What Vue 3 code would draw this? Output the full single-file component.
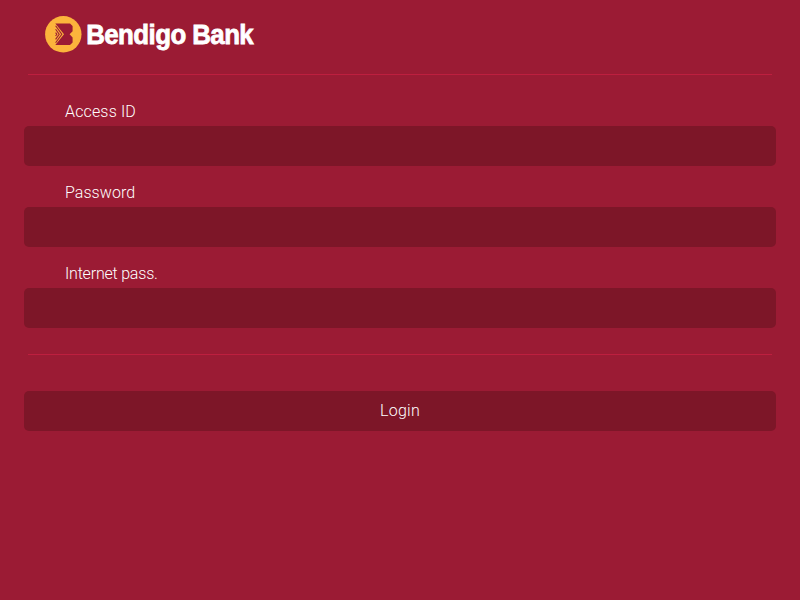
<script setup>
const fields = [
  { name: 'Access ID', spacing: 'regular' },
  { name: 'Password', spacing: 'snug' },
  { name: 'Internet pass.', spacing: 'tight' },
]
</script>

<template>
  <main class="page">
    <header class="header">
      <svg class="logo" width="230" height="44" viewBox="0 0 230 44" role="img" aria-label="Bendigo Bank">
        <circle cx="19.3" cy="20.3" r="18.2" fill="#fcb43c" />
        <path d="M11.3 9.5H26L28.6 12V17.2L25.6 20.3L28.6 23.4V28.6L26 31.1H11.3L20 20.3Z" fill="#9b1b34" />
        <path d="M11.6 11.8L17.8 20.3L11.6 28.8M11.6 15.2L15.2 20.3L11.6 25.4M11.6 18.6L12.8 20.3L11.6 22" fill="none" stroke="#9b1b34" stroke-width="1.1" />
        <text class="wordmark" x="42.2" y="30.4" textLength="167" lengthAdjust="spacingAndGlyphs">Bendigo Bank</text>
      </svg>
    </header>
    <hr class="rule" />
    <section class="fields">
      <label v-for="field in fields" :key="field.name" class="field">
        <span class="label" :class="field.spacing">{{ field.name }}</span>
        <input class="input" type="text" readonly />
      </label>
    </section>
    <hr class="rule" />
    <button class="login" type="button">Login</button>
  </main>
</template>

<style>
body {
  background: #9b1b34;
}
</style>

<style scoped>
.page {
  box-sizing: border-box;
  min-height: 600px;
  padding: 0 24px;
  background: #9b1b34;
  color: #fff;
  font: 300 16px/18px Roboto, "Liberation Sans", sans-serif;
}
.header {
  height: 60px;
  padding: 14px 0 0 20px;
}
.logo {
  display: block;
}
.wordmark {
  fill: #fff;
  stroke: #fff;
  stroke-width: 0.8px;
  font: bold 28px "Liberation Sans", Arial, sans-serif;
  letter-spacing: -0.6px;
}
.rule {
  height: 1px;
  margin: 0 4px;
  border: 0;
  background: #bd1f3f;
}
.fields {
  display: flex;
  flex-direction: column;
  gap: 17px;
  padding: 28px 0 26px;
}
.field {
  display: flex;
  flex-direction: column;
  gap: 5px;
}
.field + .field {
  padding-top: 1px;
}
.label {
  padding-left: 41px;
}
.regular {
  letter-spacing: 0.15px;
}
.snug {
  letter-spacing: 0.05px;
}
.tight {
  letter-spacing: -0.2px;
}
.input,
.login {
  display: block;
  box-sizing: border-box;
  width: 100%;
  height: 40px;
  border: 0;
  border-radius: 5px;
  outline: 0;
  background: #7d1628;
  color: #fff;
  font: inherit;
}
.login {
  margin-top: 36px;
  padding: 0;
  letter-spacing: 0.25px;
  text-align: center;
}
</style>
